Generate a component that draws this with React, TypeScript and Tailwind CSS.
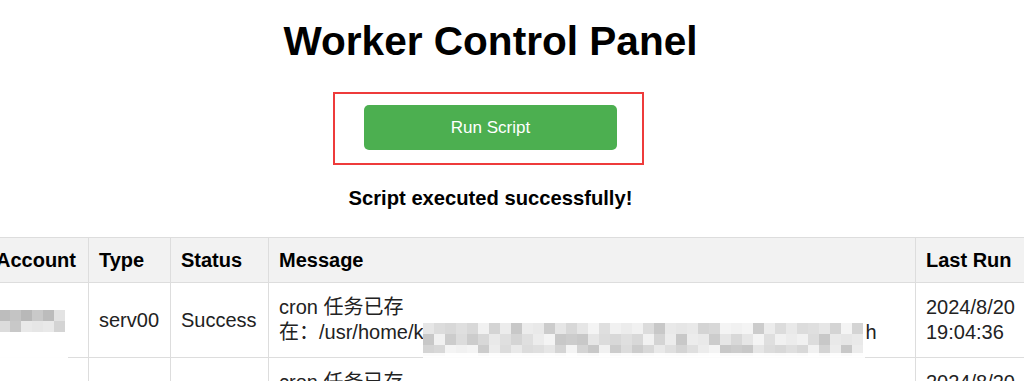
import React from "react";

const shades = ["#dcdcdc", "#ececec", "#d4d4d4", "#e6e6e6", "#cccccc", "#f1f1f1", "#dfdfdf", "#e9e9e9", "#c8c8c8", "#f4f4f4", "#d8d8d8"];

// pixelated blur that hides private text
const Mosaic = ({ cols, rows, size, seed, dark = false }: { cols: number; rows: number; size: number; seed: number; dark?: boolean }) => {
  return (
    <span className="inline-flex flex-col align-middle">
      {Array.from({ length: rows }).map((_, r) => (
        <span key={r} className="flex">
          {Array.from({ length: cols }).map((_, c) => {
            const i = (c * 7 + r * 5 + seed * 3 + ((c * c) % 5)) % shades.length;
            const bg = dark && r === 0 ? ["#bdbdbd", "#c4c4c4", "#b8b8b8", "#c9c9c9", "#bcbcbc", "#e3e3e3"][c % 6] : shades[i];
            return <span key={c} className="block" style={{ width: size, height: size, background: bg }} />;
          })}
        </span>
      ))}
    </span>
  );
};

const Row = ({ blurAccount }: { blurAccount: boolean }) => (
  <tr>
    <td className="border border-[#dddddd] px-[10px] h-[75px] align-middle">
      {blurAccount && (
        <span className="relative block w-[62px] ml-[3px]">
          <Mosaic cols={6} rows={2} size={11} seed={2} dark />
          <span className="absolute left-[-13px] top-[30px] w-[82px] h-[22px] bg-white/95" />
        </span>
      )}
    </td>
    <td className="border border-[#dddddd] px-[10px] align-middle">serv00</td>
    <td className="border border-[#dddddd] px-[10px] align-middle">Success</td>
    <td className="border border-[#dddddd] px-[10px] align-middle">
      cron 任务已存
      <br />
      <span className="whitespace-nowrap">
        在：/usr/home/k
        <span className="relative inline-block w-[442px] h-[25px] align-top">
          <span className="absolute left-0 top-[3px]">
            <Mosaic cols={40} rows={3} size={11} seed={1} />
          </span>
          <span className="absolute left-0 top-[33px] w-[442px] h-[6px] bg-white/90" />
        </span>
        h
      </span>
    </td>
    <td className="border border-[#dddddd] px-[10px] align-middle">
      2024/8/20
      <br />
      19:04:36
    </td>
  </tr>
);

export default function App() {
  return (
    <div className="w-[1024px] h-[381px] overflow-hidden bg-white text-black font-['Liberation_Sans','Noto_Sans_CJK_SC',sans-serif]">
      <div className="w-[981px] flex flex-col items-center">
        <h1 className="mt-[18px] text-[40.6px] leading-[46px] font-bold">Worker Control Panel</h1>

        <div className="mt-[28px] mr-[4px] w-[311px] h-[73px] border-2 border-[#ee3b3b] pl-[29px] pt-[11px]">
          <button className="w-[253px] h-[45px] rounded-[5px] bg-[#4caf50] text-white text-[17px]">Run Script</button>
        </div>

        <p className="mt-[22px] text-[20.2px] leading-[23px] font-bold">Script executed successfully!</p>
      </div>

      <table className="mt-[27px] ml-[-15px] w-[1042px] table-fixed border-collapse text-left text-[20px] leading-[25px] text-[#222]">
        <colgroup>
          <col className="w-[103px]" />
          <col className="w-[82px]" />
          <col className="w-[98px]" />
          <col className="w-[647px]" />
          <col className="w-[112px]" />
        </colgroup>
        <thead>
          <tr className="bg-[#f2f2f2] text-black">
            <th className="border border-[#dddddd] px-[10px] h-[45px] font-bold">Account</th>
            <th className="border border-[#dddddd] px-[10px] font-bold">Type</th>
            <th className="border border-[#dddddd] px-[10px] font-bold">Status</th>
            <th className="border border-[#dddddd] px-[10px] font-bold">Message</th>
            <th className="border border-[#dddddd] px-[10px] font-bold">Last Run</th>
          </tr>
        </thead>
        <tbody>
          <Row blurAccount />
          <Row blurAccount={false} />
        </tbody>
      </table>
    </div>
  );
}
